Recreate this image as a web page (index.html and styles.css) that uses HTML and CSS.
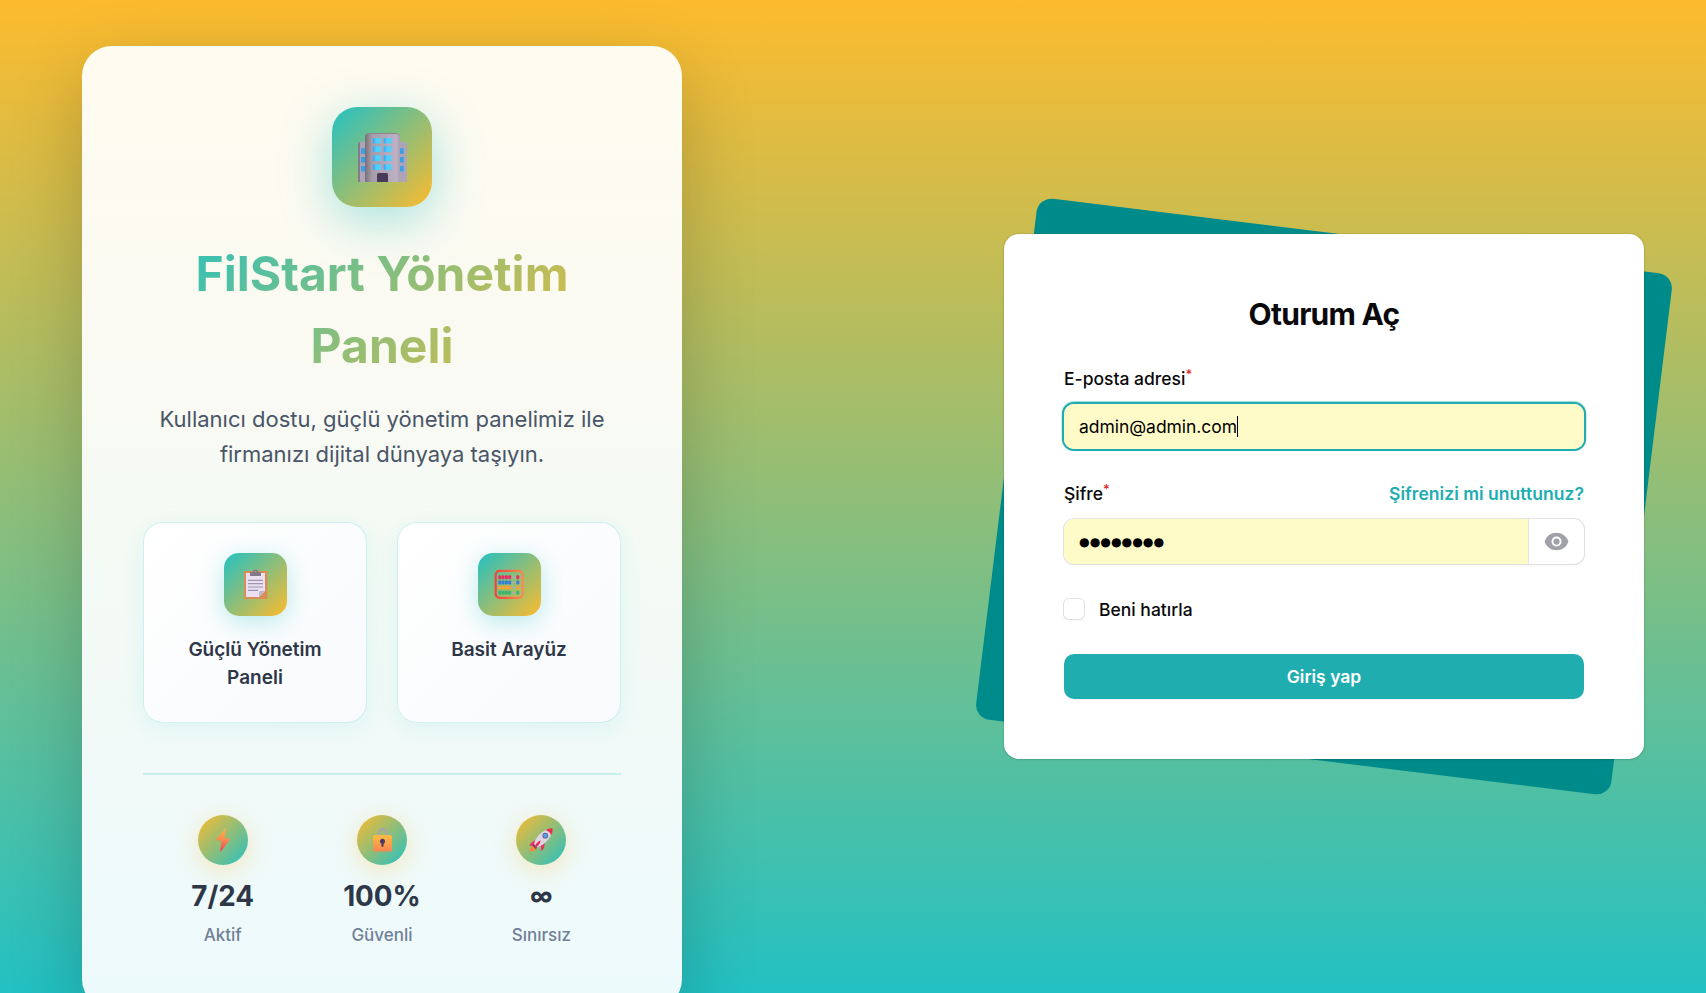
FILE: index.html
```html
<!DOCTYPE html>
<html lang="tr">
<head>
<meta charset="utf-8">
<title>FilStart Yönetim Paneli</title>
<link rel="stylesheet" href="styles.css">
</head>
<body>
<div class="page">
  <section class="intro">
    <div class="logo">
      <svg width="50" height="50" viewBox="0 0 50 50">
        <defs>
          <linearGradient id="wall" x1="0" x2="1"><stop offset="0" stop-color="#776e79"/><stop offset=".2" stop-color="#a59da9"/><stop offset=".9" stop-color="#bdb0c5"/><stop offset="1" stop-color="#a99fae"/></linearGradient>
          <linearGradient id="glass" x1="0" x2="1"><stop offset="0" stop-color="#3b9fee"/><stop offset=".4" stop-color="#4fd0ff"/></linearGradient>
        </defs>
        <path d="M1 50V13q0-3.300 3.300-3.300H46.700Q50 9.700 50 13V50z" fill="#aea4b6"/>
        <path d="M1 50V13q0-3 2-3V50z" fill="#857b88"/>
        <g fill="#389fe8"><path d="M4 16.300h5v5.400H4zM4 25h5v5.400H4zM4 34h5v5.400H4zM42 16.300h4.700v5.400H42zM42 25h4.700v5.400H42zM42 34h4.700v5.400H42z"/></g>
        <path d="M8 50V5q0-4 4-4H39q4 0 4 4V50z" fill="url(#wall)"/>
        <path d="M9 3.500Q10 1.500 12 1.500H39q2 0 3 2" fill="none" stroke="#8e8492"/>
        <g fill="url(#glass)"><rect x="16" y="6" width="8" height="5.500"/><rect x="26.700" y="6" width="7.800" height="5.500"/><rect x="16" y="14.300" width="8" height="5.700"/><rect x="26.700" y="14.300" width="7.800" height="5.700"/><rect x="16" y="23.300" width="8" height="5.700"/><rect x="26.700" y="23.300" width="7.800" height="5.700"/><rect x="16" y="32.300" width="8" height="5.700"/><rect x="26.700" y="32.300" width="7.800" height="5.700"/></g>
        <path d="M20 50v-7.500q0-1.500 1.500-1.500h8q1.500 0 1.500 1.500V50z" fill="#493b57"/>
      </svg>
    </div>
    <h1 class="intro-title">FilStart Yönetim Paneli</h1>
    <p class="intro-text">Kullanıcı dostu, güçlü yönetim panelimiz ile firmanızı dijital dünyaya taşıyın.</p>
    <div class="features">
      <div class="feature">
        <div class="feature-icon">
          <svg width="30" height="30" viewBox="0 0 30 30">
            <rect x="4" y="2" width="23.300" height="28" rx="1" fill="#d98d58"/>
            <path d="M6 4h19v18l-6 6H6z" fill="#e9e0f2"/>
            <path d="M19 28v-4.500q0-1.500 1.500-1.500H25z" fill="#c3b5cb"/>
            <path d="M8 11.300h15M8 14.700h15M8 18h15M8 21.400h10" stroke="#a195ad" stroke-width="1.200"/>
            <path d="M10 7V4.500Q10 3 11.500 3H13q0-2.500 2.500-2.500T18 3h1.500Q21 3 21 4.500V7z" fill="#84798a"/>
            <circle cx="15.500" cy="2.600" r=".8" fill="#c98d69"/>
          </svg>
        </div>
        <h3 class="feature-title">Güçlü Yönetim Paneli</h3>
      </div>
      <div class="feature">
        <div class="feature-icon">
          <svg width="30" height="30" viewBox="0 0 30 30">
            <defs>
              <linearGradient id="frame" x1="0" x2="1"><stop offset="0" stop-color="#f4433a"/><stop offset="1" stop-color="#fb8950"/></linearGradient>
            </defs>
            <rect x="1.700" y="1.800" width="27" height="27" rx="4" fill="none" stroke="url(#frame)" stroke-width="2.200"/>
            <path d="M3 8.300h24M3 13.400h24M3 18.500h24M3 23.700h24" stroke="#b9a3c2" stroke-width=".9"/>
            <g fill="#e72d62"><rect x="4.300" y="6.300" width="3" height="4" rx="1.200"/><rect x="7.600" y="6.300" width="3" height="4" rx="1.200"/><rect x="10.900" y="6.300" width="3" height="4" rx="1.200"/><rect x="14.200" y="6.300" width="3" height="4" rx="1.200"/><rect x="22.300" y="6.300" width="3" height="4" rx="1.200"/></g>
            <g fill="#337fd2"><rect x="4.300" y="11.400" width="3" height="4" rx="1.200"/><rect x="7.600" y="11.400" width="3" height="4" rx="1.200"/><rect x="10.900" y="11.400" width="3" height="4" rx="1.200"/><rect x="14.200" y="11.400" width="3" height="4" rx="1.200"/><rect x="22.300" y="11.400" width="3" height="4" rx="1.200"/></g>
            <g fill="#fba22e"><rect x="4.300" y="16.500" width="3" height="4" rx="1.200"/><rect x="7.600" y="16.500" width="3" height="4" rx="1.200"/><rect x="10.900" y="16.500" width="3" height="4" rx="1.200"/><rect x="14.200" y="16.500" width="3" height="4" rx="1.200"/><rect x="22.300" y="16.500" width="3" height="4" rx="1.200"/></g>
            <g fill="#37b76b"><rect x="4.300" y="21.700" width="3" height="4" rx="1.200"/><rect x="7.600" y="21.700" width="3" height="4" rx="1.200"/><rect x="10.900" y="21.700" width="3" height="4" rx="1.200"/><rect x="14.200" y="21.700" width="3" height="4" rx="1.200"/><rect x="22.300" y="21.700" width="3" height="4" rx="1.200"/></g>
          </svg>
        </div>
        <h3 class="feature-title">Basit Arayüz</h3>
      </div>
    </div>
    <div class="stats">
      <div class="stat">
        <div class="stat-icon">
          <svg width="24" height="24" viewBox="0 0 24 24">
            <defs><linearGradient id="bolt" x1="0" x2="0" y1="0" y2="1"><stop offset="0" stop-color="#fdb547"/><stop offset=".5" stop-color="#f98a4d"/><stop offset="1" stop-color="#f03f55"/></linearGradient></defs>
            <path d="M14.200.2 4.800 12q-.2.600.4.600h5.300L9.200 23.200q.2.500.8 0L19.200 11.200q.2-.6-.5-.6H13.800L14.800.5q-.2-.6-.6-.3z" fill="url(#bolt)"/>
          </svg>
        </div>
        <div class="stat-value">7/24</div>
        <div class="stat-label">Aktif</div>
      </div>
      <div class="stat">
        <div class="stat-icon">
          <svg width="24" height="24" viewBox="0 0 24 24">
            <defs><linearGradient id="lock" x1="0" x2="0" y1="0" y2="1"><stop offset="0" stop-color="#fdbd44"/><stop offset="1" stop-color="#f98553"/></linearGradient></defs>
            <path d="M8.900 9V5.200a4 4 0 0 1 8 0V9" fill="none" stroke="#aaa2b4" stroke-width="2.300"/>
            <rect x="3" y="7" width="19" height="16.400" rx="2" fill="url(#lock)"/>
            <circle cx="12.500" cy="13.300" r="2.500" fill="#4a3a63"/>
            <path d="M12.500 13v4.800" stroke="#4a3a63" stroke-width="2.200" stroke-linecap="round"/>
          </svg>
        </div>
        <div class="stat-value">100%</div>
        <div class="stat-label">Güvenli</div>
      </div>
      <div class="stat">
        <div class="stat-icon">
          <svg width="24" height="24" viewBox="0 0 24 24">
            <path d="M5.500 17.500q-4 0-5.200 6 6 0 7.500-3.500z" fill="#f9843b"/>
            <path d="M7.500 12.500q-5 0-7 5.500l5-.5zM11.500 17.500q1.500 3 .5 5.800 4-2.500 3.500-8.300z" fill="#ef2e62"/>
            <path d="M4.700 16.300 8 19.700l-1.200 1.200-3.300-3.300z" fill="#533f69"/>
            <path d="M5 16q2-9 12-14.300 4.500-.7 5.300 4.800Q18 15.800 8.300 19.500z" fill="#dcd5e2"/>
            <path d="M16.500 2q3-2 6.800-1.800 1 3.600-1.200 7Q21 3.500 16.500 2z" fill="#e92f51"/>
            <circle cx="16.300" cy="7.700" r="2.900" fill="#765f91"/>
            <circle cx="16.300" cy="7.700" r="2" fill="#43a6ef"/>
            <path d="M11.700 12.200Q7 14 5.200 20q5.500-1.800 6.500-7.800z" fill="#ed2860"/>
          </svg>
        </div>
        <div class="stat-value infinity">∞</div>
        <div class="stat-label">Sınırsız</div>
      </div>
    </div>
  </section>

  <main class="login">
    <form class="login-card">
      <h2 class="login-title">Oturum Aç</h2>
      <div class="field">
        <div class="label-row"><label class="label">E-posta adresi<sup class="required">*</sup></label></div>
        <div class="control control-focused"><div class="value"><span class="typed">admin@admin.com</span><span class="caret"></span></div></div>
      </div>
      <div class="field">
        <div class="label-row"><label class="label">Şifre<sup class="required">*</sup></label><a class="forgot">Şifrenizi mi unuttunuz?</a></div>
        <div class="control">
          <div class="value password">●●●●●●●●</div>
          <span class="reveal">
            <svg width="25" height="25" viewBox="0 0 20 20" fill="currentColor">
              <path d="M10 12.500a2.500 2.500 0 1 0 0-5 2.500 2.500 0 0 0 0 5Z"/>
              <path fill-rule="evenodd" clip-rule="evenodd" d="M.664 10.590a1.651 1.651 0 0 1 0-1.186A10.004 10.004 0 0 1 10 3c4.257 0 7.893 2.660 9.336 6.410.147.381.146.804 0 1.186A10.004 10.004 0 0 1 10 17c-4.257 0-7.893-2.660-9.336-6.410ZM14 10a4 4 0 1 1-8 0 4 4 0 0 1 8 0Z"/>
            </svg>
          </span>
        </div>
      </div>
      <label class="remember"><span class="checkbox"></span>Beni hatırla</label>
      <button class="submit" type="button">Giriş yap</button>
    </form>
  </main>
</div>
</body>
</html>
```
FILE: styles.css
```css
* { box-sizing: border-box; margin: 0; padding: 0; }

body {
  font-family: Inter, "Noto Sans", sans-serif;
  overflow: hidden;
}

.page {
  height: 993px;
  overflow: hidden;
  display: flex;
  justify-content: space-between;
  align-items: flex-start;
  padding: 0 62px 0 82px;
  background: linear-gradient(0deg, #22c1c3 0%, #fdbb2d 100%);
}

.intro {
  width: 600px;
  margin-top: 46px;
  padding: 60px;
  border: 1px solid rgba(255, 255, 255, .2);
  border-radius: 30px;
  background: linear-gradient(#fffbf0, #fafaf2 30%, #f3faf6 60%, #edfafc);
  box-shadow: 0 25px 75px rgba(0, 0, 0, .2);
  text-align: center;
}

.logo {
  width: 100px;
  height: 100px;
  margin: 0 auto 31px;
  border-radius: 25px;
  display: flex;
  align-items: center;
  justify-content: center;
  background: linear-gradient(135deg, #22c1c3, #fdbb2d);
  box-shadow: 0 12.500px 50px rgba(34, 193, 195, .4);
}

.intro-title {
  font-size: 48px;
  line-height: 72px;
  font-weight: 700;
  margin-bottom: 20px;
  background: linear-gradient(135deg, #22c1c3, #fdbb2d);
  background-clip: text;
  -webkit-background-clip: text;
  color: transparent;
}

.intro-text {
  font-size: 22px;
  line-height: 35.200px;
  color: #4a5568;
  margin-bottom: 49.200px;
}

.features {
  display: grid;
  grid-template-columns: 1fr 1fr;
  gap: 30px;
  margin-bottom: 50px;
}

.feature {
  padding: 30px;
  border: 1px solid rgba(34, 193, 195, .2);
  border-radius: 20px;
  background: linear-gradient(135deg, #fff, #f8fafc);
  box-shadow: 0 5px 25px rgba(34, 193, 195, .1);
}

.feature-icon {
  width: 63px;
  height: 63px;
  margin: 0 auto 20.800px;
  border-radius: 15px;
  display: flex;
  align-items: center;
  justify-content: center;
  background: linear-gradient(135deg, #22c1c3, #fdbb2d);
  box-shadow: 0 6px 25px rgba(34, 193, 195, .3);
}

.feature-title {
  font-size: 19px;
  line-height: 28px;
  font-weight: 600;
  color: #2d3748;
}

.stats {
  display: flex;
  padding-top: 40px;
  border-top: 2px solid rgba(34, 193, 195, .2);
}

.stat { flex: 1; }

.stat-icon {
  width: 50px;
  height: 50px;
  margin: 0 auto 10px;
  border-radius: 50%;
  display: flex;
  align-items: center;
  justify-content: center;
  background: linear-gradient(135deg, #fdbb2d, #22c1c3);
  box-shadow: 0 5px 25px rgba(253, 187, 45, .3);
}

.stat-value {
  font-size: 27.800px;
  line-height: 42px;
  height: 42px;
  font-weight: 700;
  color: #2d3748;
}

.infinity {
  font-family: "Open Sans", "Noto Sans", sans-serif;
  font-size: 34px;
}

.stat-label {
  font-size: 17px;
  line-height: 25px;
  font-weight: 500;
  margin-top: 6px;
  color: #718096;
}

.login {
  height: 993px;
  display: flex;
  align-items: center;
}

.login-card {
  position: relative;
  z-index: 0;
  width: 640px;
  height: 525px;
  padding: 60px;
  display: flex;
  flex-direction: column;
  gap: 30px;
  color: #09090b;
  font-size: 17.500px;
}

/* Tilted backdrop and the white sheet above it */
.login-card::before,
.login-card::after {
  content: "";
  position: absolute;
  inset: 0;
  z-index: -1;
  border-radius: 15px;
}

.login-card::before {
  background: #008b8b;
  transform: rotate(7deg);
}

.login-card::after {
  background: #fff;
  box-shadow: 0 0 0 1px rgba(9, 9, 11, .05), 0 1px 3px rgba(0, 0, 0, .1);
}

.login-title {
  font-size: 30px;
  line-height: 40px;
  font-weight: 700;
  letter-spacing: -.75px;
  text-align: center;
}

.field {
  display: flex;
  flex-direction: column;
  gap: 10px;
}

.label-row {
  height: 30px;
  display: flex;
  justify-content: space-between;
  line-height: 30px;
}

.label { font-weight: 500; }

.required {
  font-size: 13px;
  line-height: 0;
  position: relative;
  top: -.5em;
  vertical-align: baseline;
  color: #dc2626;
}

.forgot {
  font-weight: 600;
  letter-spacing: .04px;
  color: #20adb0;
}

.control {
  height: 45px;
  display: flex;
  border-radius: 10px;
  overflow: hidden;
  background: #fff;
  box-shadow: 0 0 0 1px rgba(9, 9, 11, .1), 0 1px 2px 1px rgba(0, 0, 0, .03);
}

.control-focused {
  box-shadow: 0 0 0 2px #20adb0, 0 -.5px 0 2.500px rgba(32, 173, 176, .4);
}

.value {
  flex: 1;
  min-width: 0;
  display: flex;
  align-items: center;
  padding: 0 15px;
  background: #fffbc8;
  color: #000;
}

.typed { letter-spacing: -.04px; }

.password {
  font-family: "DejaVu Sans", sans-serif;
  font-size: 12.200px;
}

.caret {
  width: 1px;
  height: 21px;
  background: #000;
}

.reveal {
  width: 56px;
  display: flex;
  align-items: center;
  justify-content: center;
  border-left: 1px solid #e4e4e7;
  color: #a1a1aa;
}

.remember {
  height: 30px;
  display: flex;
  align-items: center;
  gap: 15px;
  font-weight: 500;
}

.checkbox {
  width: 20px;
  height: 20px;
  border-radius: 5px;
  background: #fff;
  box-shadow: 0 0 0 1px rgba(9, 9, 11, .1), 0 1px 2px 1px rgba(0, 0, 0, .03);
}

.submit {
  height: 45px;
  border: 0;
  border-radius: 10px;
  background: #20adb0;
  color: #fff;
  font: 600 17.500px/25px Inter, sans-serif;
  box-shadow: 0 1px 2px rgba(0, 0, 0, .05);
}
```
